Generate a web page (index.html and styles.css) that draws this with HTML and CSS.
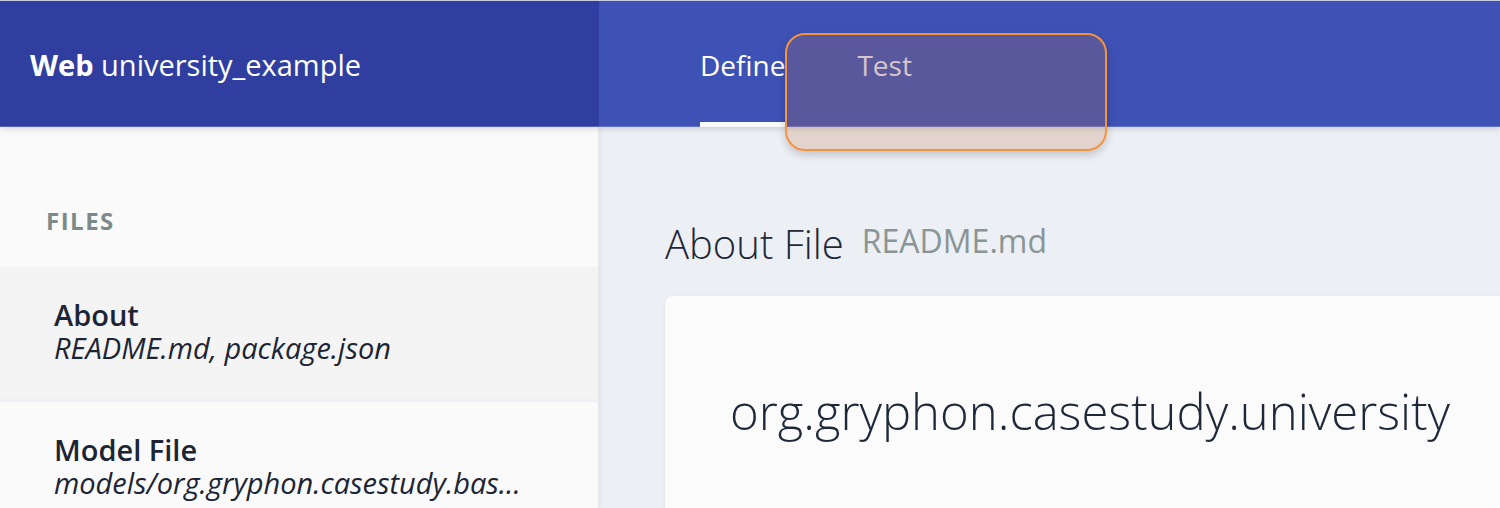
FILE: index.html
```html
<!DOCTYPE html>
<html lang="en">
<head>
<meta charset="utf-8">
<title>Web university_example</title>
<link rel="stylesheet" href="styles.css">
</head>
<body>
<div class="app">
  <header class="topbar">
    <div class="brand"><b>Web</b> university_example</div>
    <nav class="tabs">
      <a class="tab active">Define</a>
      <a class="tab">Test</a>
    </nav>
  </header>
  <div class="content">
    <aside class="sidebar">
      <div class="section-title">FILES</div>
      <ul class="files">
        <li class="file selected">
          <div class="file-name">About</div>
          <div class="file-path">README.md, package.json</div>
        </li>
        <li class="file">
          <div class="file-name">Model File</div>
          <div class="file-path">models/org.gryphon.casestudy.bas...</div>
        </li>
      </ul>
    </aside>
    <main class="main">
      <h1 class="page-title">About File<span class="page-sub">README.md</span></h1>
      <div class="card">
        <div class="card-title">org.gryphon.casestudy.university</div>
      </div>
    </main>
  </div>
  <div class="highlight"></div>
</div>
</body>
</html>
```
FILE: styles.css
```css
* { box-sizing: border-box; }
html, body { margin: 0; padding: 0; }
body {
  width: 1500px;
  height: 508px;
  overflow: hidden;
  font-family: "Open Sans", "Liberation Sans", sans-serif;
  background: #eceff4;
  color: #1e2839;
}
.app { position: relative; height: 508px; display: flex; flex-direction: column; overflow: hidden; }

.topbar {
  display: flex;
  height: 127px;
  flex: none;
  border-top: 1px solid #c7cbe2;
  background: #3e51b5;
  box-shadow: 0 2px 6px rgba(0,0,0,0.14);
  position: relative;
  z-index: 2;
}
.brand {
  width: 599px;
  flex: none;
  background: #303f9f;
  color: #fff;
  font-size: 29px;
  padding: 2px 0 0 30px;
  display: flex;
  align-items: center;
  border-bottom: 1px solid #5463bd;
  white-space: pre;
}
.brand b { font-weight: 700; }
.tabs {
  flex: 1;
  display: flex;
  gap: 72px;
  padding-left: 101px;
  border-bottom: 1px solid #6272c6;
}
.tab {
  font-size: 28px;
  color: rgba(255,255,255,0.82);
  display: flex;
  align-items: center;
  padding-top: 2px;
  position: relative;
}
.tab.active { color: #fff; }
.tab.active::after {
  content: "";
  position: absolute;
  left: 0;
  right: 0;
  bottom: -1px;
  height: 5px;
  background: #fafbfd;
}

.content { flex: 1; display: flex; min-height: 0; }
.sidebar {
  width: 599px;
  flex: none;
  background: #fafafa;
  border-right: 1px solid #e6e6e6;
  box-shadow: 1px 0 5px rgba(0,0,0,0.06);
  padding-top: 77px;
  position: relative;
  z-index: 1;
}
.section-title {
  font-size: 24px;
  font-weight: 700;
  letter-spacing: 1.5px;
  color: #7c8a8a;
  padding-left: 46px;
  margin-bottom: 30px;
}
.files { list-style: none; margin: 0; padding: 0; }
.file {
  padding: 31px 20px 35px 54px;
  border-bottom: 3px solid #edf0f5;
  line-height: 33px;
  font-size: 29px;
}
.file.selected { background: #f4f4f4; }
.file-name { font-weight: 600; color: #1c2535; }
.file-path { font-style: italic; color: #1c2535; white-space: nowrap; }

.main {
  flex: 1;
  min-width: 0;
  overflow: hidden;
  padding: 93px 0 0 66px;
}
.page-title {
  margin: 0 0 28px;
  height: 48px;
  font-size: 40px;
  font-weight: 300;
  line-height: 48px;
  color: #1e2839;
  white-space: nowrap;
}
.page-sub {
  font-size: 32px;
  font-weight: 400;
  line-height: 32px;
  color: #8a9595;
  margin-left: 18px;
  vertical-align: 6px;
}
.card {
  width: 1000px;
  height: 400px;
  background: #fbfbfb;
  border-radius: 8px;
  box-shadow: 0 1px 4px rgba(0,0,0,0.06);
  padding: 85px 0 0 65px;
}
.card-title {
  font-size: 49px;
  font-weight: 300;
  line-height: 60px;
  color: #1e2839;
  white-space: nowrap;
}

.highlight {
  position: absolute;
  left: 785px;
  top: 33px;
  width: 322px;
  height: 118px;
  border: 2px solid #f5923e;
  border-radius: 20px;
  background: rgba(190,115,70,0.22);
  box-shadow: 0 4px 8px rgba(0,0,0,0.18);
  z-index: 5;
}
```
